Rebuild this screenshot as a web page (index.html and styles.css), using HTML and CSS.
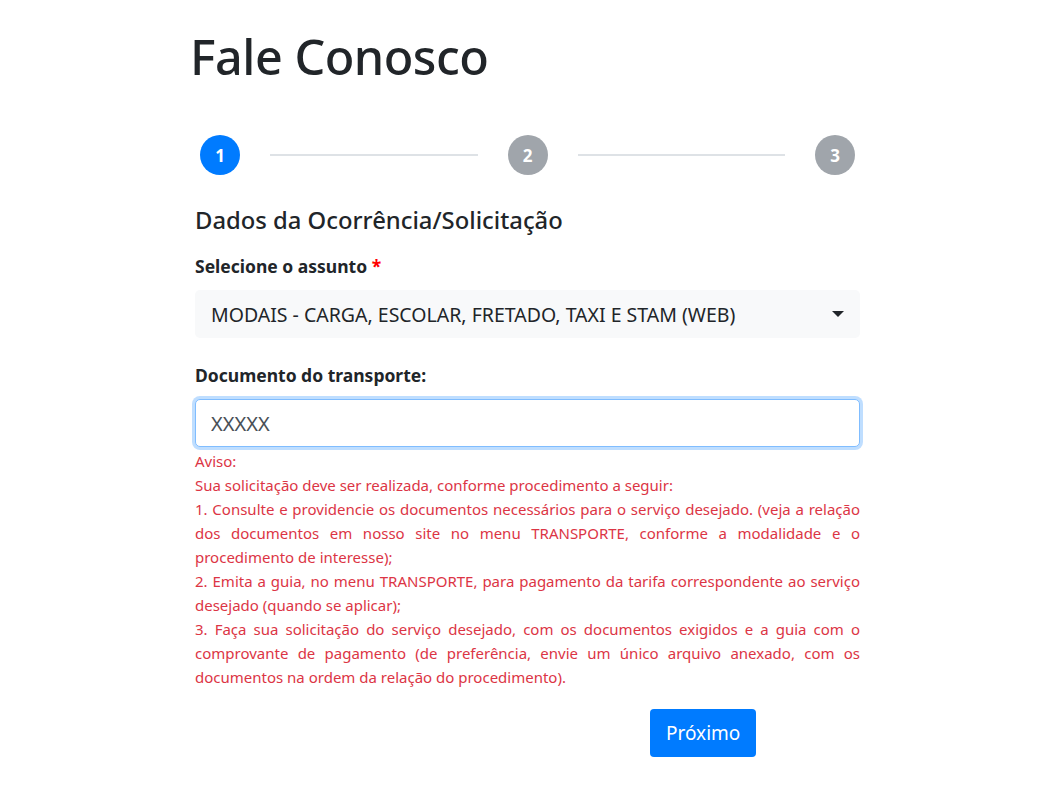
FILE: index.html
```html
<!DOCTYPE html>
<html lang="pt-BR">
<head>
    <meta charset="UTF-8">
    <meta name="viewport" content="width=device-width, initial-scale=1.0">
    <title>Fale Conosco</title>
    <link rel="stylesheet" href="styles.css">
</head>
<body>
    <div class="container">
        <h1>Fale Conosco</h1>

        <div class="stepper">
            <span class="step active">1</span>
            <span class="step-line"></span>
            <span class="step">2</span>
            <span class="step-line"></span>
            <span class="step">3</span>
        </div>

        <form id="contato-form">
            <h2>Dados da Ocorrência/Solicitação</h2>

            <label for="assunto">Selecione o assunto <span class="required">*</span></label>
            <div class="select-wrap">
                <select id="assunto" name="assunto">
                    <option>MODAIS - CARGA, ESCOLAR, FRETADO, TAXI E STAM (WEB)</option>
                </select>
            </div>

            <label for="documento" class="label-doc">Documento do transporte:</label>
            <input type="text" id="documento" name="documento" value="XXXXX">

            <div class="aviso">
                <p>Aviso:</p>
                <p>Sua solicitação deve ser realizada, conforme procedimento a seguir:</p>
                <p>1. Consulte e providencie os documentos necessários para o serviço desejado. (veja a relação dos documentos em nosso site no menu TRANSPORTE, conforme a modalidade e o procedimento de interesse);</p>
                <p>2. Emita a guia, no menu TRANSPORTE, para pagamento da tarifa correspondente ao serviço desejado (quando se aplicar);</p>
                <p>3. Faça sua solicitação do serviço desejado, com os documentos exigidos e a guia com o comprovante de pagamento (de preferência, envie um único arquivo anexado, com os documentos na ordem da relação do procedimento).</p>
            </div>

            <div class="actions">
                <button type="submit">Próximo</button>
            </div>
        </form>
    </div>
</body>
</html>
```

FILE: styles.css
```css
body {
    font-family: "Noto Sans", "Open Sans", sans-serif;
    margin: 0;
    padding: 0;
    background-color: #ffffff;
    color: #212529;
}

.container {
    width: 665px;
    margin: 0 auto;
    padding: 27px 6px 0 0;
}

h1 {
    font-size: 48.5px;
    font-weight: 500;
    margin: 0 0 0 -5px;
    line-height: 1.2;
    letter-spacing: -0.5px;
}

.stepper {
    display: flex;
    align-items: center;
    margin: 50px 5px 0 5px;
}

.step {
    width: 40px;
    height: 40px;
    border-radius: 50%;
    background-color: #a0a5ab;
    color: #ffffff;
    font-weight: 700;
    font-size: 17px;
    display: flex;
    align-items: center;
    justify-content: center;
    flex-shrink: 0;
}

.step.active {
    background-color: #007bff;
}

.step-line {
    flex: 1;
    height: 2px;
    background-color: #dee2e6;
    margin: 0 30px;
}

h2 {
    font-size: 23.8px;
    font-weight: 500;
    margin: 30px 0 0 0;
    line-height: 30px;
}

label {
    display: block;
    font-weight: 700;
    font-size: 17.5px;
    margin: 19px 0 12px 0;
}

.label-doc {
    margin-top: 25px;
}

.required {
    color: #ff0000;
}

.select-wrap {
    position: relative;
}

.select-wrap::after {
    content: "";
    position: absolute;
    right: 16px;
    top: 21px;
    border-left: 6px solid transparent;
    border-right: 6px solid transparent;
    border-top: 6px solid #212529;
}

select, input {
    width: 100%;
    box-sizing: border-box;
    height: 48px;
    font-family: inherit;
    border-radius: 5px;
}

select {
    appearance: none;
    -webkit-appearance: none;
    background-color: #f8f9fa;
    border: none;
    color: #212529;
    font-size: 19.5px;
    padding: 0 16px;
}

input {
    border: 1px solid #80bdff;
    box-shadow: 0 0 0 3px rgba(0, 123, 255, 0.25);
    color: #495057;
    font-size: 20px;
    padding: 0 15px;
    outline: none;
}

.aviso {
    color: #dc3545;
    font-size: 15px;
    line-height: 24px;
    margin-top: 2px;
    text-align: justify;
}

.aviso p {
    margin: 0;
}

.actions {
    margin-top: 20px;
    padding-left: 455px;
}

button {
    background-color: #007bff;
    color: #ffffff;
    border: none;
    border-radius: 4px;
    font-family: inherit;
    font-size: 19px;
    height: 48px;
    padding: 0 16px;
    cursor: pointer;
}
```
